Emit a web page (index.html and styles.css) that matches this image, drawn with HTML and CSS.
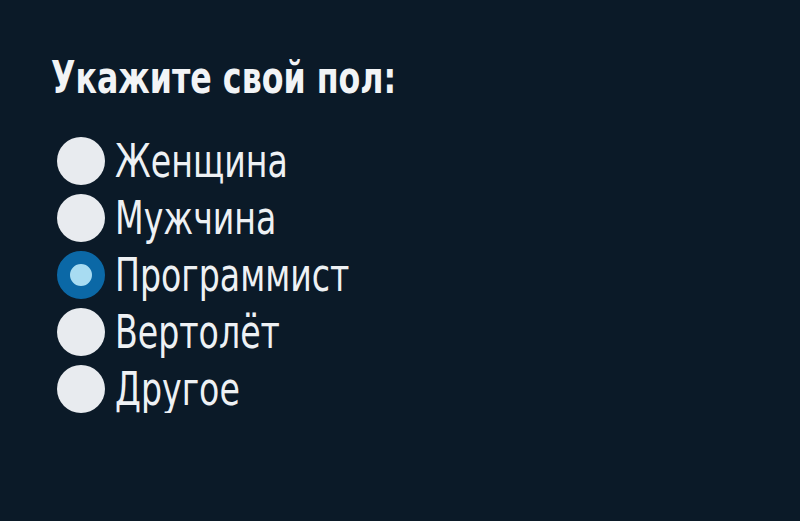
FILE: index.html
```html
<!DOCTYPE html>
<html>
<head>
    <meta charset="utf-8">
    <title>Опрос</title>
    <link rel="stylesheet" href="styles.css">
</head>
<body>
    <div class="container">
        <h1><span class="narrow">Укажите свой пол:</span></h1>
        <form class="options">
            <label class="option"><span class="radio"></span><span class="narrow">Женщина</span></label>
            <label class="option"><span class="radio"></span><span class="narrow">Мужчина</span></label>
            <label class="option"><span class="radio checked"></span><span class="narrow">Программист</span></label>
            <label class="option"><span class="radio"></span><span class="narrow">Вертолёт</span></label>
            <label class="option"><span class="radio"></span><span class="narrow">Другое</span></label>
        </form>
    </div>
</body>
</html>
```
FILE: styles.css
```css
body {
    margin: 0;
    background-color: #0b1a28;
    font-family: "DejaVu Sans", sans-serif;
    font-stretch: condensed;
    color: #f2f4f6;
}

.container {
    padding: 56px 0 0 51px;
}

/* узкое начертание: сжимаем текст по горизонтали */
.narrow {
    display: inline-block;
    transform: scaleX(0.8);
    transform-origin: left center;
    white-space: nowrap;
}

h1 {
    margin: 0 0 37px;
    font-size: 44px;
    font-weight: bold;
    line-height: 44px;
}

.options {
    display: flex;
    flex-direction: column;
    gap: 9px;
    padding-left: 6px;
}

.option {
    display: flex;
    align-items: center;
    gap: 10px;
    height: 48px;
    font-size: 47px;
    line-height: 48px;
    color: #eef1f4;
}

.option .narrow {
    transform: scaleX(0.785);
}

.radio {
    width: 48px;
    height: 48px;
    border-radius: 50%;
    background-color: #e8ebef;
    flex-shrink: 0;
}

/* выбранный вариант */
.radio.checked {
    background-color: #a8dcf2;
    border: 13px solid #0b68a6;
    box-sizing: border-box;
}
```
